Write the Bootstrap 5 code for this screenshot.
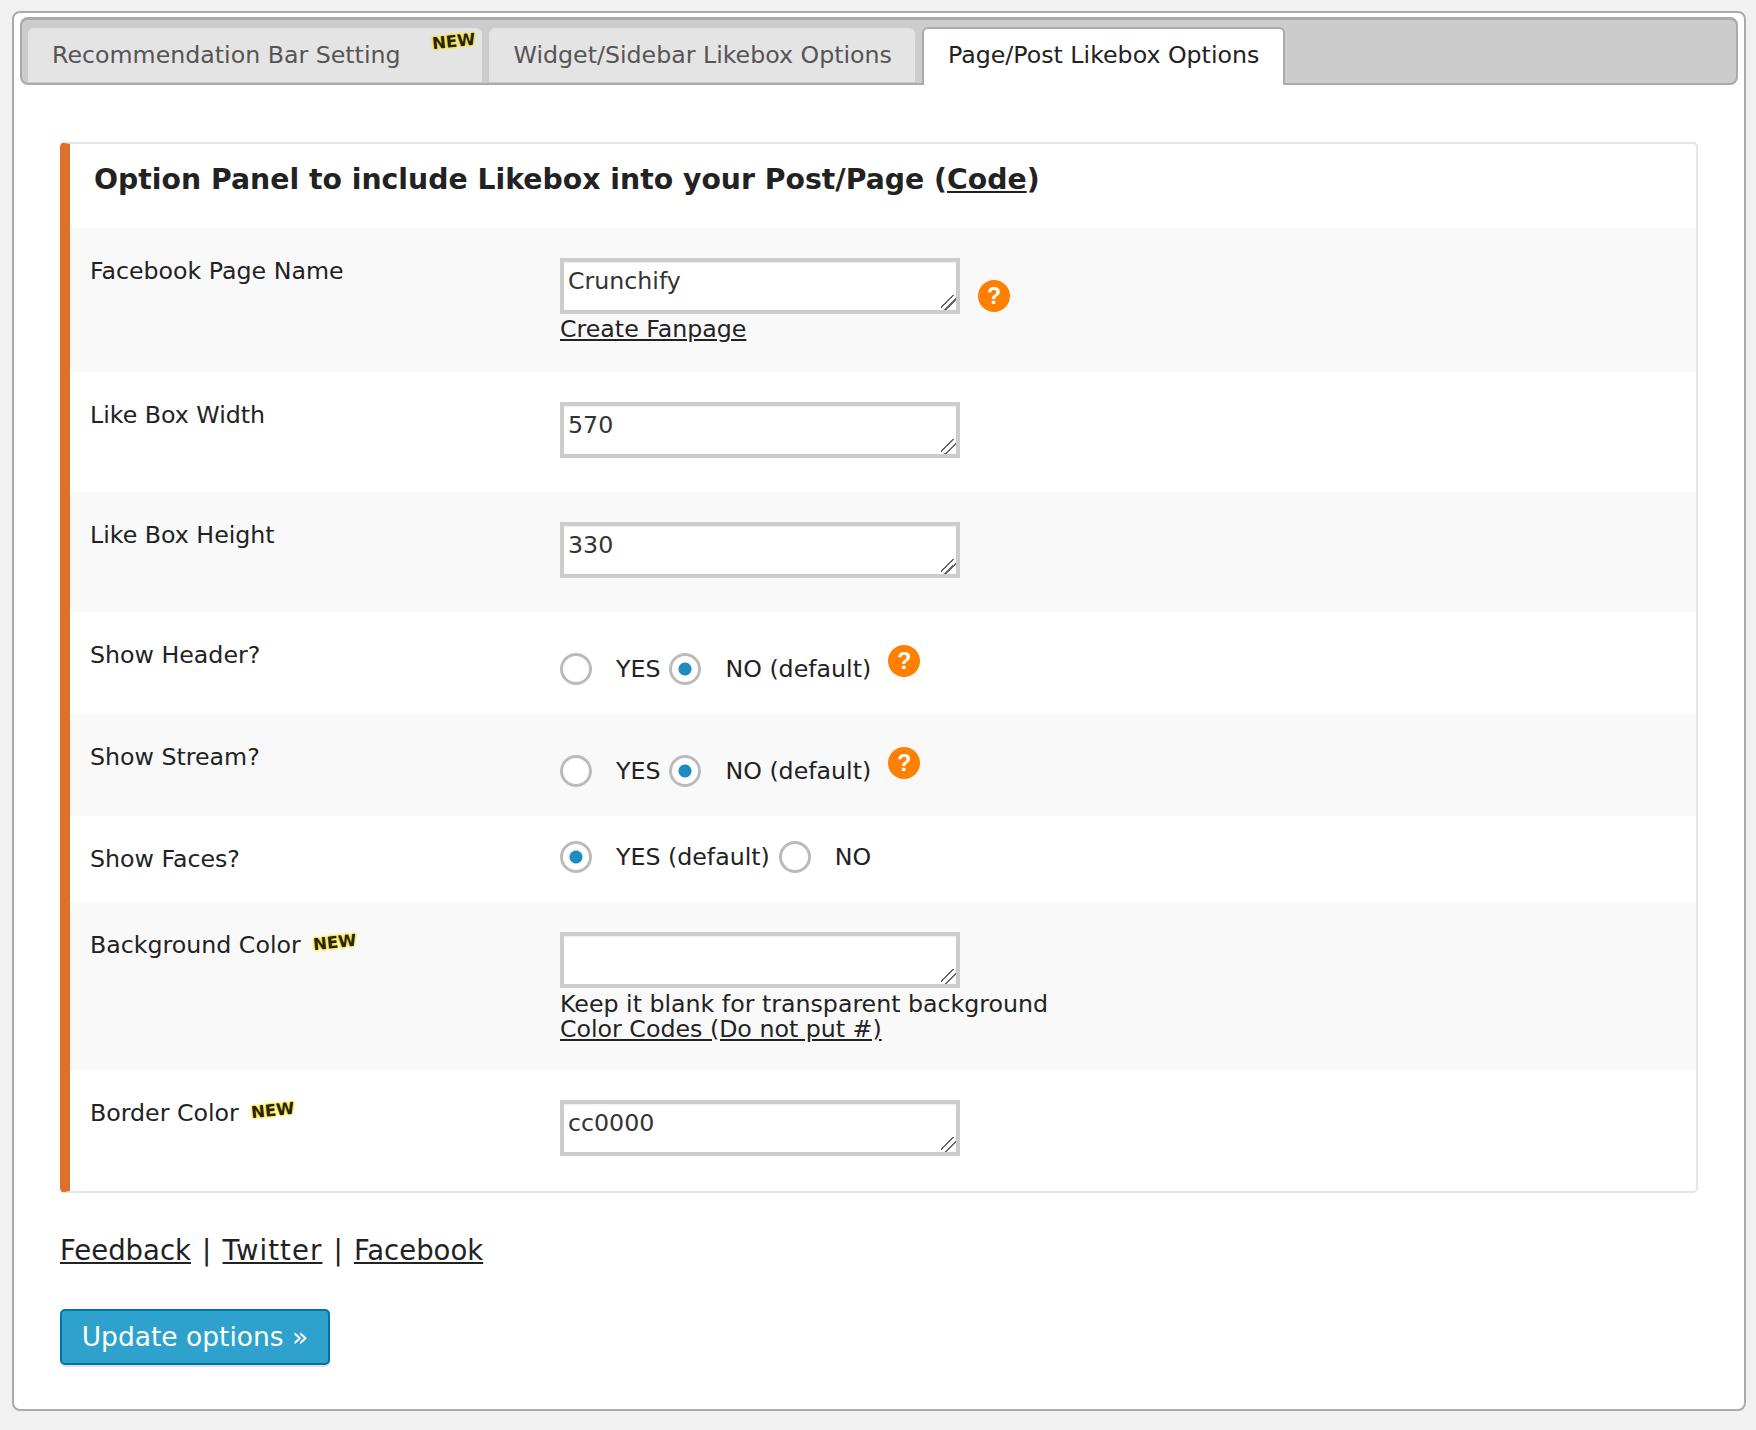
<!DOCTYPE html>
<html lang="en">
<head>
    <meta charset="UTF-8">
    <meta name="viewport" content="width=device-width, initial-scale=1.0">
    <title>Likebox Options</title>
    <link href="https://cdn.jsdelivr.net/npm/bootstrap@5.3.0/dist/css/bootstrap.min.css" rel="stylesheet">
    <style>
        body {
            background: #f1f1f1;
            color: #222;
            font-family: "DejaVu Sans", Verdana, sans-serif;
            font-size: 23.7px;
            line-height: 24.5px;
            padding: 11px 10px 19px 12px;
        }

        a { color: #222; }
        a:hover { color: #222; }

        .wrap-box {
            height: 1400px;
            background: #fff;
            border: 2px solid #aaa;
            border-radius: 8px;
            padding: 4px 6px;
        }

        .tab-strip {
            height: 68px;
            padding: 8px 0 0 6px;
            gap: 7px;
            align-items: flex-start;
            background: #ccc;
            border: 2px solid #aaa;
            border-top-width: 3px;
            border-radius: 8px;
        }

        .tab-strip .nav-link {
            position: relative;
            height: 54px;
            padding: 15px 23px 0 25px;
            color: #555;
            font-size: 23.7px;
            background: #e4e4e4;
            border-radius: 6px 6px 0 0;
        }

        .tab-strip .tab-with-tag { padding: 15px 81px 0 24px; }

        .tab-strip .nav-link.active {
            height: 58px;
            margin-top: -1px;
            color: #222;
            background: #fff;
            border: 2px solid #aaa;
            border-bottom: 0;
            padding: 14px 24px 0;
        }

        .new-tag {
            display: inline-block;
            color: #222;
            font-size: 16.5px;
            line-height: 15px;
            font-weight: 700;
            text-shadow: 0 0 2px #ffe000, 0 0 3px #ffe000, 0 0 3px #ffe000;
            transform: rotate(-6deg);
        }

        .tab-strip .new-tag {
            position: absolute;
            top: 6px;
            right: 6px;
        }

        .label-tag { margin-left: 12px; vertical-align: 5px; }

        .opt-panel {
            margin: 57px 40px 0 40px;
            height: 1051px;
            border: 2px solid #e5e5e5;
            border-left: 10px solid #dd702a;
            border-radius: 5px;
            overflow: hidden;
        }

        .panel-title {
            height: 84px;
            margin: 0;
            padding: 20px 0 0 24px;
            font-size: 28.3px;
            line-height: 32px;
            font-weight: 700;
        }

        .opt-row {
            padding: 31px 0 0 20px;
        }

        .opt-row:nth-of-type(odd) { background: #f9f9f9; }

        .opt-label { width: 470px; flex: none; }

        .row-one { height: 144px; }
        .row-two { height: 120px; }
        .row-four { height: 102px; }
        .row-six { height: 86px; }
        .row-seven { height: 168px; }

        .row-four .opt-value { padding-top: 10px; }
        .row-six .opt-value { margin-top: -6px; }

        .opt-input.form-control {
            display: block;
            width: 400px;
            height: 56px;
            min-height: 0;
            margin: -1px 0 3px;
            padding: 4px 4px;
            color: #333;
            font-size: 23.7px;
            line-height: 30px;
            border: 4px solid #ccc;
            border-radius: 0;
            box-shadow: inset 0 1px 2px rgba(0, 0, 0, .07);
        }

        .row-seven .opt-input.form-control { margin-bottom: 4px; }

        .opt-input::-webkit-resizer {
            background: linear-gradient(135deg, transparent 37%, #666 37% 44%, transparent 44% 60%, #666 60% 67%, transparent 67%);
        }

        .opt-radio.form-check-input {
            flex: none;
            width: 32px;
            height: 32px;
            margin: 0 24px 0 0;
            background-color: #fff;
            border: 3px solid #bbb;
            box-shadow: none;
        }

        .opt-radio.form-check-input:checked {
            background-color: #fff;
            background-image: radial-gradient(circle, #1e8cbe 0 6px, transparent 7px);
            border-color: #bbb;
        }

        .radio-text { margin-right: 9px; }

        .help-dot {
            width: 32px;
            height: 32px;
            flex: none;
            color: #fff;
            font: 700 23px/32px "Liberation Sans", Arial, sans-serif;
            text-align: center;
            background: #ff7f00;
            border-radius: 50%;
        }

        .help-up { margin: -16px 0 0 8px; }
        .help-side { margin: 21px 0 0 18px; }

        .foot-links {
            margin: 40px 0 0 40px;
            font-size: 27.5px;
            line-height: 34px;
            word-spacing: 2.4px;
        }

        .twitter-link { letter-spacing: 1.1px; }

        .update-btn.btn {
            display: block;
            width: 270px;
            height: 56px;
            margin: 42px 0 0 40px;
            padding: 0;
            color: #fff;
            font-size: 26.5px;
            background: #2ea2cc;
            border: 2px solid #0074a2;
            border-radius: 5px;
            box-shadow: 0 2px 0 rgba(0, 0, 0, .12);
        }
    </style>
</head>
<body>

<div class="wrap-box">
    <nav class="nav tab-strip">
        <a class="nav-link tab-with-tag" href="#">Recommendation Bar Setting <span class="new-tag">NEW</span></a>
        <a class="nav-link" href="#">Widget/Sidebar Likebox Options</a>
        <a class="nav-link active" href="#">Page/Post Likebox Options</a>
    </nav>

    <div class="opt-panel">
        <h3 class="panel-title">Option Panel to include Likebox into your Post/Page (<a href="#">Code</a>)</h3>

        <div class="opt-row row-one d-flex">
            <div class="opt-label">Facebook Page Name</div>
            <div class="opt-value">
                <textarea class="form-control opt-input">Crunchify</textarea>
                <a href="#">Create Fanpage</a>
            </div>
            <div class="help-dot help-side">?</div>
        </div>

        <div class="opt-row row-two d-flex">
            <div class="opt-label">Like Box Width</div>
            <div class="opt-value"><textarea class="form-control opt-input">570</textarea></div>
        </div>

        <div class="opt-row row-two d-flex">
            <div class="opt-label">Like Box Height</div>
            <div class="opt-value"><textarea class="form-control opt-input">330</textarea></div>
        </div>

        <div class="opt-row row-four d-flex">
            <div class="opt-label">Show Header?</div>
            <div class="opt-value d-flex align-items-center align-self-start">
                <input class="form-check-input opt-radio" type="radio" name="hdr">
                <span class="radio-text">YES</span>
                <input class="form-check-input opt-radio" type="radio" name="hdr" checked>
                <span class="radio-text">NO (default)</span>
                <div class="help-dot help-up">?</div>
            </div>
        </div>

        <div class="opt-row row-four d-flex">
            <div class="opt-label">Show Stream?</div>
            <div class="opt-value d-flex align-items-center align-self-start">
                <input class="form-check-input opt-radio" type="radio" name="str">
                <span class="radio-text">YES</span>
                <input class="form-check-input opt-radio" type="radio" name="str" checked>
                <span class="radio-text">NO (default)</span>
                <div class="help-dot help-up">?</div>
            </div>
        </div>

        <div class="opt-row row-six d-flex">
            <div class="opt-label">Show Faces?</div>
            <div class="opt-value d-flex align-items-center align-self-start">
                <input class="form-check-input opt-radio" type="radio" name="fac" checked>
                <span class="radio-text">YES (default)</span>
                <input class="form-check-input opt-radio" type="radio" name="fac">
                <span class="radio-text">NO</span>
            </div>
        </div>

        <div class="opt-row row-seven d-flex">
            <div class="opt-label">Background Color<span class="new-tag label-tag">NEW</span></div>
            <div class="opt-value">
                <textarea class="form-control opt-input"></textarea>
                Keep it blank for transparent background<br>
                <a href="#">Color Codes (Do not put #)</a>
            </div>
        </div>

        <div class="opt-row d-flex">
            <div class="opt-label">Border Color<span class="new-tag label-tag">NEW</span></div>
            <div class="opt-value"><textarea class="form-control opt-input">cc0000</textarea></div>
        </div>
    </div>

    <div class="foot-links">
        <a href="#">Feedback</a> | <a class="twitter-link" href="#">Twitter</a> | <a href="#">Facebook</a>
    </div>

    <button class="btn update-btn" type="button">Update options »</button>
</div>

<script src="https://cdn.jsdelivr.net/npm/bootstrap@5.3.0/dist/js/bootstrap.bundle.min.js"></script>
</body>
</html>
